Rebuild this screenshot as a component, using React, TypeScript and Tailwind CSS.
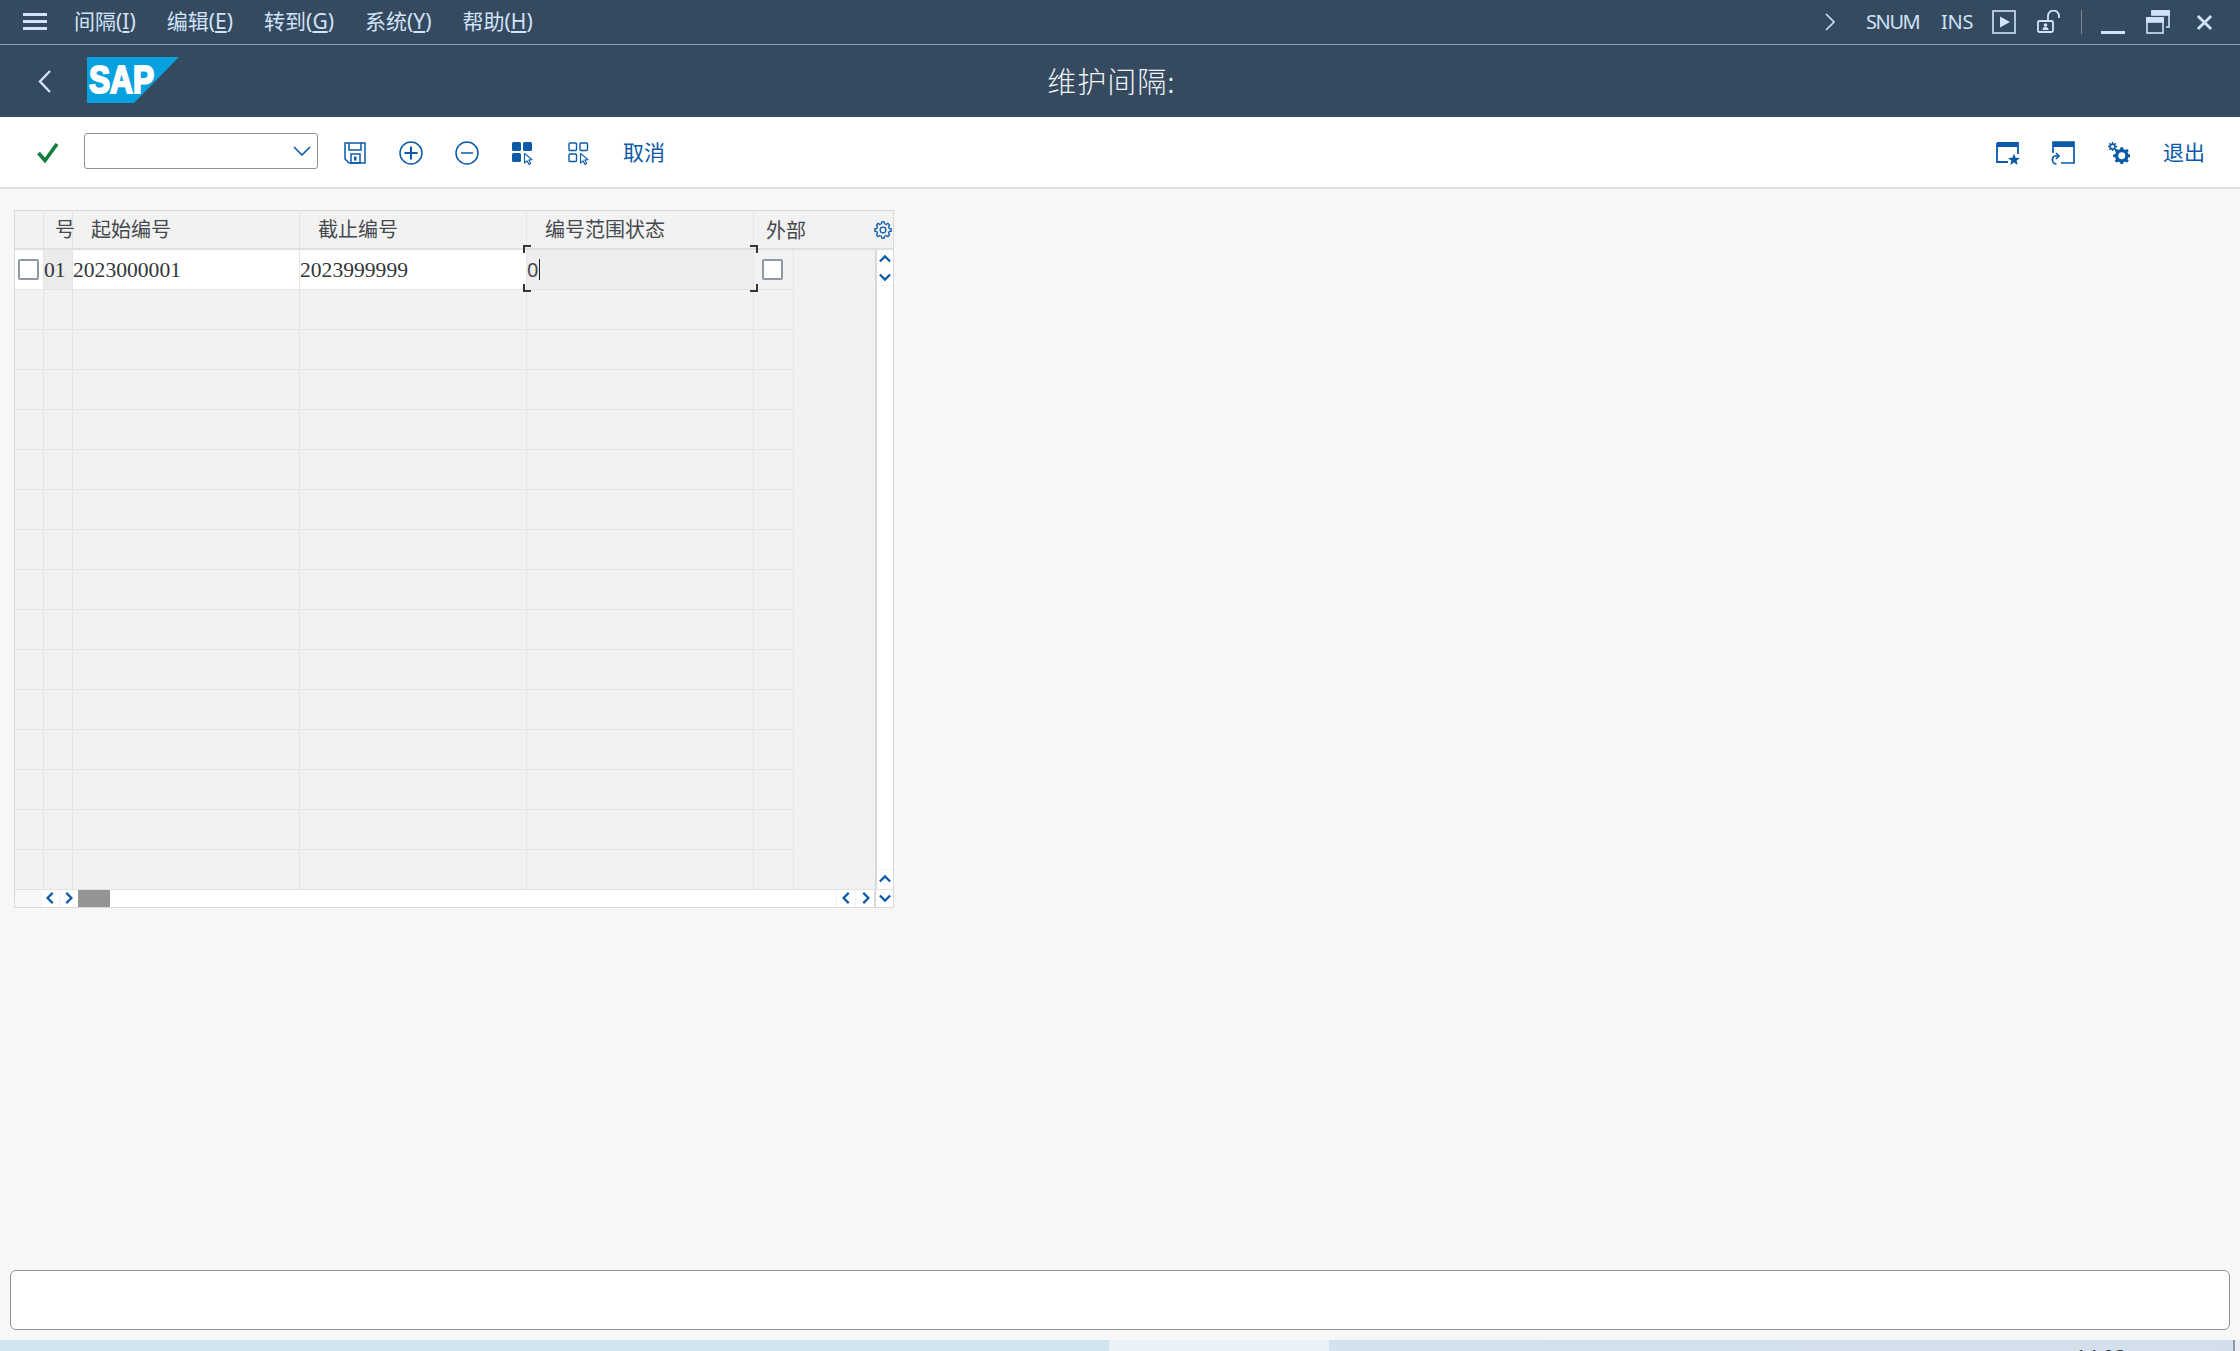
import React from "react";

const CJK = "font-['Noto_Sans','Noto_Sans_CJK_SC',sans-serif]";
const SERIF = "font-['Liberation_Serif','Noto_Sans_CJK_SC',serif]";

const gearPath = (cx: number, cy: number, rIn: number, rOut: number, n: number) => {
  const pts: string[] = [];
  const step = (Math.PI * 2) / n;
  for (let i = 0; i < n; i++) {
    const a = i * step;
    const t = step * 0.2;
    const b = step * 0.3;
    const p = (r: number, ang: number) =>
      `${(cx + r * Math.cos(ang)).toFixed(2)} ${(cy + r * Math.sin(ang)).toFixed(2)}`;
    pts.push(p(rIn, a - b), p(rOut, a - t), p(rOut, a + t), p(rIn, a + b));
  }
  return "M" + pts.join(" L") + " Z";
};

const Menu = ({ zh, k }: { zh: string; k: string }) => (
  <span className="whitespace-nowrap">
    {zh}(<span className="underline underline-offset-2">{k}</span>)
  </span>
);

const Chev = ({ dir }: { dir: "l" | "r" | "u" | "d" }) => {
  const d = { l: "M9 1 L3 7 L9 13", r: "M5 1 L11 7 L5 13", u: "M1 10 L7 4 L13 10", d: "M1 4 L7 10 L13 4" }[dir];
  return (
    <svg viewBox="0 0 14 14" className="w-[12px] h-[12px]" fill="none" stroke="#0a5aa8" strokeWidth="2.6">
      <path d={d} />
    </svg>
  );
};

const Cursor = () => (
  <path d="M12.5 11.5 L12.5 21 L15 18.8 L17 22.5 L18.6 21.6 L16.8 18 L20 17.6 Z" fill="#fff" stroke="#0a5aa8" strokeWidth="1.1" strokeLinejoin="round" />
);

const Check = () => <div className="w-[21px] h-[21px] bg-white border-2 border-[#8f98a5] rounded-[2px]" />;

const cols = ["w-[29px]", "w-[29px]", "w-[227px]", "w-[227px]", "w-[227px]", "w-[40px]"];

const Row = ({ first }: { first?: boolean }) => (
  <div className="flex h-[40px] border-b border-[#e5e5e5] w-[779px] shrink-0">
    {cols.map((c, i) => (
      <div
        key={i}
        className={`${c} shrink-0 border-r border-[#e5e5e5] ${
          first
            ? i === 1
              ? "bg-[#ebebeb]"
              : i === 4
                ? "bg-[#eeeeee] relative z-10"
                : i === 5
                  ? "bg-[#f2f2f2]"
                  : "bg-white"
            : "bg-[#f2f2f2]"
        } ${first ? "flex items-center" : ""} text-[#32363a] text-[21.6px] ${SERIF}`}
      >
        {first && i === 0 && <div className="ml-[3px]"><Check /></div>}
        {first && i === 1 && <span className="mt-[2px]">01</span>}
        {first && i === 2 && <span className="mt-[2px]">2023000001</span>}
        {first && i === 3 && <span className="mt-[2px]">2023999999</span>}
        {first && i === 4 && (
          <>
            <span className={`text-[20px] ${CJK} text-[#45494d]`}>0</span>
            <span className="ml-[1px] w-px h-[21px] bg-[#222]" />
            <span className="absolute left-[-4px] top-[-5px] w-[8px] h-[8px] border-l-2 border-t-2 border-[#32363a]" />
            <span className="absolute right-[-5px] top-[-5px] w-[8px] h-[8px] border-r-2 border-t-2 border-[#32363a]" />
            <span className="absolute left-[-4px] bottom-[-3px] w-[8px] h-[8px] border-l-2 border-b-2 border-[#32363a]" />
            <span className="absolute right-[-5px] bottom-[-3px] w-[8px] h-[8px] border-r-2 border-b-2 border-[#32363a]" />
          </>
        )}
        {first && i === 5 && <div className="ml-[8px]"><Check /></div>}
      </div>
    ))}
  </div>
);

export default function App() {
  return (
    <div className="w-[2240px] h-[1351px] overflow-hidden flex flex-col bg-[#f7f7f7]">
      {/* system bar */}
      <div className={`h-[45px] shrink-0 bg-[#354a5f] border-b border-[#7f9dc0] flex items-center text-[#d1e3f8] text-[21px] ${CJK}`}>
        <svg viewBox="0 0 24 18" className="ml-[23px] w-[24px] h-[18px]" fill="#d1e3f8">
          <rect x="0" y="0" width="24" height="3" />
          <rect x="0" y="7" width="24" height="3" />
          <rect x="0" y="14" width="24" height="3" />
        </svg>
        <div className="ml-[27px] flex gap-[31px]">
          <Menu zh="间隔" k="I" />
          <Menu zh="编辑" k="E" />
          <Menu zh="转到" k="G" />
          <Menu zh="系统" k="Y" />
          <Menu zh="帮助" k="H" />
        </div>
        <div className="flex-1" />
        <svg viewBox="0 0 10 18" className="w-[10px] h-[18px]" fill="none" stroke="#d1e3f8" strokeWidth="1.6">
          <path d="M1 1 L9 9 L1 17" />
        </svg>
        <span className="ml-[31px] w-[51px] text-[20px] tracking-[-1.4px] whitespace-nowrap">SNUM</span>
        <span className="ml-[24px] w-[31px] text-[20px] tracking-[-0.2px]">INS</span>
        <svg viewBox="0 0 24 24" className="ml-[20px] w-[24px] h-[24px]" fill="none" stroke="#d1e3f8" strokeWidth="1.6">
          <rect x="1" y="1" width="22" height="22" />
          <path d="M8 6.5 L18 12 L8 17.5 Z" fill="#d1e3f8" stroke="none" />
        </svg>
        <svg viewBox="0 0 24 24" className="ml-[21px] w-[24px] h-[24px]" fill="none" stroke="#d1e3f8" strokeWidth="1.8">
          <rect x="1" y="11" width="15" height="11" rx="1.5" />
          <path d="M11 11 V6 a5 5 0 0 1 11 0 V8" />
          <circle cx="8.5" cy="15" r="1.8" fill="#d1e3f8" stroke="none" />
          <path d="M5.5 20 a3 3 0 0 1 6 0 Z" fill="#d1e3f8" stroke="none" />
        </svg>
        <div className="ml-[20px] w-px h-[24px] bg-[#7a8796]" />
        <svg viewBox="0 0 24 24" className="ml-[19px] w-[24px] h-[24px] mt-[1px]" fill="#d1e3f8">
          <rect x="0" y="20" width="24" height="3" />
        </svg>
        <svg viewBox="0 0 24 24" className="ml-[21px] w-[24px] h-[24px]" fill="none" stroke="#d1e3f8" strokeWidth="1.6">
          <rect x="1" y="8" width="16" height="15" />
          <rect x="1" y="8" width="16" height="4" fill="#d1e3f8" />
          <path d="M6 5 V1 H23 V17 H20" />
          <rect x="6" y="1" width="17" height="4" fill="#d1e3f8" />
        </svg>
        <svg viewBox="0 0 18 18" className="ml-[26px] mr-[27px] w-[17px] h-[17px]" fill="none" stroke="#d1e3f8" strokeWidth="3">
          <path d="M2 2 L16 16 M16 2 L2 16" />
        </svg>
      </div>

      {/* title bar */}
      <div className="h-[72px] shrink-0 bg-[#354a5f] flex items-center">
        <svg viewBox="0 0 13 23" className="ml-[38px] w-[13px] h-[23px]" fill="none" stroke="#d1e3f8" strokeWidth="2.4">
          <path d="M12 1 L2 11.5 L12 22" />
        </svg>
        <svg viewBox="0 0 92 46" className="ml-[36px] mb-[2px] w-[92px] h-[46px]">
          <polygon points="0,0 92,0 47,46 0,46" fill="#04a0e0" />
          <text
            x="2"
            y="36"
            fill="#fff"
            fontFamily="'Liberation Sans',sans-serif"
            fontWeight="700"
            fontSize="39"
            textLength="65"
            lengthAdjust="spacingAndGlyphs"
            stroke="#fff"
            strokeWidth="2.2"
          >
            SAP
          </text>
        </svg>
        <div className="flex-1 text-center text-[#eef3f8] text-[29px] font-light mr-[196px] font-['Noto_Sans_CJK_SC',sans-serif] tracking-[1px]">
          维护间隔:
        </div>
      </div>

      {/* toolbar */}
      <div className="h-[72px] shrink-0 bg-white border-b-2 border-[#e2e2e2] flex items-center pt-[2px] text-[#0a5aa8] text-[21px]">
        <svg viewBox="0 0 22 20" className="ml-[37px] w-[22px] h-[20px] mb-[1px]" fill="none" stroke="#107e3e" strokeWidth="3.6">
          <path d="M1.5 10 L8 17.5 L20 1" />
        </svg>
        <div className="ml-[25px] mb-[4px] w-[234px] h-[36px] bg-white border border-[#89919a] rounded-[3px] flex items-center justify-end pr-[6px]">
          <svg viewBox="0 0 18 10" className="w-[18px] h-[10px]" fill="none" stroke="#0a5aa8" strokeWidth="1.6">
            <path d="M1 1 L9 9 L17 1" />
          </svg>
        </div>
        <svg viewBox="0 0 22 22" className="ml-[26px] w-[22px] h-[22px]" fill="none" stroke="#0a5aa8" strokeWidth="1.5">
          <path d="M1 1 H21 V21 H5 L1 17 Z" />
          <path d="M5 1 V8 H17 V1" />
          <rect x="7" y="12" width="9" height="9" />
          <rect x="10" y="14.5" width="2.5" height="4" fill="#0a5aa8" stroke="none" />
        </svg>
        <svg viewBox="0 0 24 24" className="ml-[33px] w-[24px] h-[24px]" fill="none" stroke="#0a5aa8" strokeWidth="1.5">
          <circle cx="12" cy="12" r="11" />
          <path d="M5.5 12 H18.5 M12 5.5 V18.5" strokeWidth="2" />
        </svg>
        <svg viewBox="0 0 24 24" className="ml-[32px] w-[24px] h-[24px]" fill="none" stroke="#0a5aa8" strokeWidth="1.5">
          <circle cx="12" cy="12" r="11" />
          <path d="M6 12 H18" />
        </svg>
        <svg viewBox="0 0 23 23" className="ml-[33px] w-[23px] h-[23px]" fill="#0a5aa8">
          <rect x="0" y="0" width="9" height="9" rx="1.5" />
          <rect x="11" y="0" width="9" height="9" rx="1.5" />
          <rect x="0" y="11" width="9" height="9" rx="1.5" />
          <Cursor />
        </svg>
        <svg viewBox="0 0 23 23" className="ml-[33px] w-[23px] h-[23px]" fill="none" stroke="#0a5aa8" strokeWidth="1.4">
          <rect x="1" y="1" width="7.5" height="7.5" rx="1" />
          <rect x="12" y="1" width="7.5" height="7.5" rx="1" />
          <rect x="1" y="12" width="7.5" height="7.5" rx="1" />
          <Cursor />
        </svg>
        <span className={`ml-[32px] ${CJK}`}>取消</span>
        <div className="flex-1" />
        <svg viewBox="0 0 24 24" className="w-[24px] h-[24px]" fill="none" stroke="#0a5aa8" strokeWidth="1.8">
          <path d="M1 2 H22 V13 M1 2 V21 H12" />
          <rect x="1" y="1" width="21" height="5" fill="#0a5aa8" stroke="none" />
          <path d="M18 12.5 L19.6 16.8 L24 17 L20.6 19.7 L21.8 24 L18 21.5 L14.2 24 L15.4 19.7 L12 17 L16.4 16.8 Z" fill="#0a5aa8" stroke="none" />
        </svg>
        <svg viewBox="0 0 24 24" className="ml-[31px] w-[24px] h-[24px]" fill="none" stroke="#0a5aa8" strokeWidth="1.7">
          <path d="M2 12 V1 H23 V22 H10" />
          <rect x="2" y="1" width="21" height="5" fill="#0a5aa8" stroke="none" />
          <path d="M5 12 L8 15 L5 18" />
          <path d="M7.5 15 H4.5 a3 3 0 0 0 -3 3 V19 a4 4 0 0 0 4 4" />
        </svg>
        <svg viewBox="0 0 24 24" className="ml-[33px] w-[22px] h-[22px]">
          <path d={gearPath(15, 15, 7.5, 9.5, 8)} fill="#0a5aa8" />
          <circle cx="15" cy="15" r="3.8" fill="#fff" />
          <path d={gearPath(5, 5, 3.6, 5, 8)} fill="#0a5aa8" />
          <circle cx="5" cy="5" r="1.8" fill="#fff" />
        </svg>
        <span className={`ml-[33px] mr-[35px] ${CJK}`}>退出</span>
      </div>

      {/* content */}
      <div className="flex-1 flex flex-col">
        <div className="ml-[14px] mt-[21px] w-[880px] h-[698px] flex flex-col border border-[#d9d9d9] bg-[#f2f2f2]">
          <div className={`h-[39px] shrink-0 flex items-center border-b-2 border-[#e0e0e0] text-[20px] text-[#45494d] ${CJK}`}>
            <div className="w-[29px] h-full border-r border-[#e5e5e5] shrink-0" />
            <div className="w-[29px] h-full border-r border-[#e5e5e5] shrink-0 flex items-center justify-end pt-[1px]">
              <span className="mr-[-3px]">号</span>
            </div>
            <div className="w-[227px] h-full border-r border-[#e5e5e5] shrink-0 flex items-center pl-[18px] pt-[1px]">起始编号</div>
            <div className="w-[227px] h-full border-r border-[#e5e5e5] shrink-0 flex items-center pl-[18px] pt-[1px]">截止编号</div>
            <div className="w-[227px] h-full border-r border-[#e5e5e5] shrink-0 flex items-center pl-[18px] pt-[1px]">编号范围状态</div>
            <div className="w-[40px] shrink-0 flex items-center pl-[12px] pt-[3px] whitespace-nowrap">外部</div>
            <div className="flex-1" />
            <svg viewBox="0 0 24 24" className="mr-[1px] w-[18px] h-[18px]" fill="none" stroke="#0a5aa8" strokeWidth="1.7" strokeLinejoin="round">
              <path d={gearPath(12, 12, 8.6, 11, 8)} />
              <circle cx="12" cy="12" r="3.8" />
            </svg>
          </div>
          <div className="flex-1 flex min-h-0">
            <div className="flex flex-col w-[860px] overflow-visible">
              <Row first />
              {Array.from({ length: 15 }).map((_, i) => (
                <Row key={i} />
              ))}
            </div>
            <div className="flex-1 bg-white border-l-2 border-[#d9d9d9] flex flex-col items-center">
              <div className="h-[18px] flex items-center justify-center"><Chev dir="u" /></div>
              <div className="h-[18px] flex items-center justify-center border-b border-[#f2f2f2] w-full"><Chev dir="d" /></div>
              <div className="flex-1" />
              <div className="h-[20px] flex items-center justify-center border-t border-[#f2f2f2] w-full pb-[2px]"><Chev dir="u" /></div>
            </div>
          </div>
          <div className="h-[18px] shrink-0 flex border-t border-[#e0e0e0] bg-white">
            <div className="w-[27px] bg-[#f7f7f7]" />
            <div className="w-[18px] flex items-center justify-center border-r border-[#f2f2f2] pb-[1px]"><Chev dir="l" /></div>
            <div className="w-[18px] flex items-center justify-center pb-[1px] pr-[2px]"><Chev dir="r" /></div>
            <div className="w-[32px] bg-[#949494]" />
            <div className="flex-1" />
            <div className="w-[19px] flex items-center justify-center border-l border-[#f2f2f2] pb-[1px] pl-[2px]"><Chev dir="l" /></div>
            <div className="w-[19px] flex items-center justify-center border-l border-[#f2f2f2] pb-[1px]"><Chev dir="r" /></div>
            <div className="w-[19px] flex items-center justify-center border-l-2 border-[#d9d9d9] pb-[2px]"><Chev dir="d" /></div>
          </div>
        </div>
        <div className="flex-1" />
        <div className="ml-[10px] mr-[10px] mb-[10px] h-[60px] bg-white border border-[#89919a] rounded-[6px]" />
      </div>

      {/* status strip */}
      <div className="h-[11px] shrink-0 flex overflow-hidden">
        <div className="w-[1109px] bg-[#d0e5ee]" />
        <div className="w-[220px] bg-[#e9f2f7]" />
        <div className="w-[904px] bg-gradient-to-r from-[#d3e2ee] to-[#d3dfeb] flex justify-end pr-[107px]">
          <span className={`text-[20px] leading-none mt-[7px] text-[#32363a] ${CJK}`}>14:03</span>
        </div>
        <div className="w-[2px] bg-[#8f98a5]" />
        <div className="flex-1 bg-[#e8eef4]" />
      </div>
    </div>
  );
}
